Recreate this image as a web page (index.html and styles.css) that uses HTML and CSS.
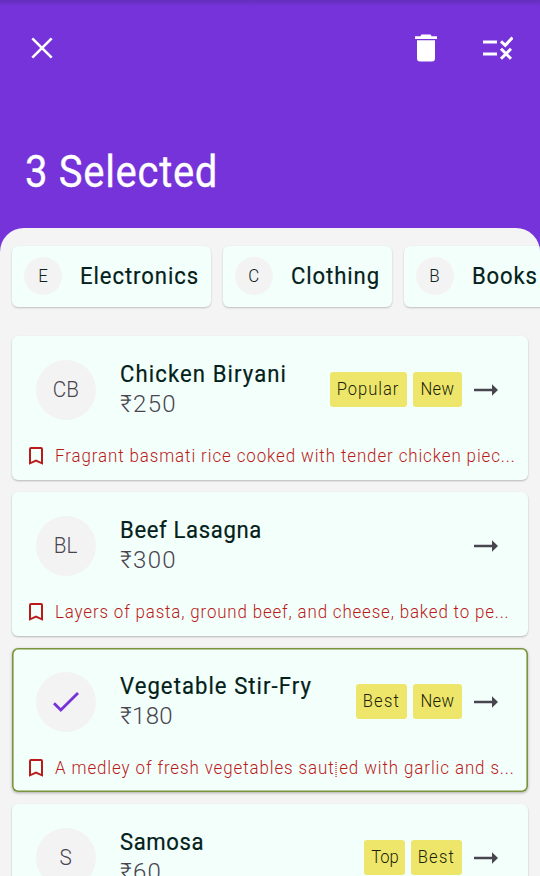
FILE: index.html
```html
<!DOCTYPE html>
<html lang="en">
<head>
<meta charset="utf-8">
<title>Catalogue selection</title>
<link rel="stylesheet" href="styles.css">
</head>
<body>
<svg class="defs" width="0" height="0">
  <symbol id="arrow" viewBox="0 0 24 12"><path d="M0 4.700h18V.300L24 6l-6 5.700V7.300H0z"/></symbol>
  <symbol id="bookmark" viewBox="0 0 14 18"><path d="M1 16.300V2q0-1 1-1h10q1 0 1 1v14.300l-6-2.600z" fill="none" stroke="currentColor" stroke-width="2"/></symbol>
</svg>
<header class="appbar">
  <div class="toolbar">
    <svg class="close" viewBox="0 0 22 22"><path d="M1.300 1.300l19.400 19.400M20.700 1.300L1.300 20.700"/></svg>
    <svg class="trash" viewBox="0 0 22 28"><path d="M6.500 .500h9l1.200 1.700H22v2.800H0V2.200h5.300zM2 6.300h18v18.200q0 3-3 3H5q-3 0-3-3z"/></svg>
    <svg class="rules" viewBox="0 0 30 24"><path d="M0 5.900h14M0 17.900h14M18 5.300l4.300 4L29.500 1.500M18 12.800l10 10M28 12.800l-10 10"/></svg>
  </div>
  <h1><span class="narrow t-title">3 Selected</span></h1>
</header>
<main class="sheet">
  <nav class="chips">
    <div class="chip c1"><span class="dot"><span>E</span></span><span class="label narrow t-el">Electronics</span></div>
    <div class="chip c2"><span class="dot"><span>C</span></span><span class="label narrow t-cl">Clothing</span></div>
    <div class="chip c3"><span class="dot"><span>B</span></span><span class="label narrow t-bo">Books</span></div>
  </nav>
  <section class="list">
    <article class="card">
      <div class="row">
        <div class="avatar"><span>CB</span></div>
        <div class="info"><h2 class="narrow t-chicken">Chicken Biryani</h2><p class="price">₹250</p></div>
        <div class="badges"><span class="badge w-popular"><span>Popular</span></span><span class="badge w-new"><span>New</span></span></div>
        <svg class="arrow"><use href="#arrow"/></svg>
      </div>
      <div class="desc"><svg class="mark"><use href="#bookmark"/></svg><span class="note d1">Fragrant basmati rice cooked with tender chicken piec...</span></div>
    </article>
    <article class="card">
      <div class="row">
        <div class="avatar"><span>BL</span></div>
        <div class="info"><h2 class="narrow t-beef">Beef Lasagna</h2><p class="price">₹300</p></div>
        <svg class="arrow"><use href="#arrow"/></svg>
      </div>
      <div class="desc"><svg class="mark"><use href="#bookmark"/></svg><span class="note d2">Layers of pasta, ground beef, and cheese, baked to pe...</span></div>
    </article>
    <article class="card selected">
      <div class="row">
        <div class="avatar"><svg class="check" viewBox="0 0 26 20"><path d="M1 11.200l6.800 6.800L25 1"/></svg></div>
        <div class="info"><h2 class="narrow t-veg">Vegetable Stir-Fry</h2><p class="price p3">₹180</p></div>
        <div class="badges"><span class="badge w-best"><span>Best</span></span><span class="badge w-new"><span>New</span></span></div>
        <svg class="arrow"><use href="#arrow"/></svg>
      </div>
      <div class="desc"><svg class="mark"><use href="#bookmark"/></svg><span class="note d3">A medley of fresh vegetables saut<i class="missing"></i>ed with garlic and s...</span></div>
    </article>
    <article class="card">
      <div class="row">
        <div class="avatar"><span>S</span></div>
        <div class="info"><h2 class="narrow t-sam">Samosa</h2><p class="price p4">₹60</p></div>
        <div class="badges"><span class="badge w-top"><span>Top</span></span><span class="badge w-best"><span>Best</span></span></div>
        <svg class="arrow"><use href="#arrow"/></svg>
      </div>
    </article>
  </section>
</main>
</body>
</html>
```
FILE: styles.css
```css
* { box-sizing: border-box; }
body {
  margin: 0;
  height: 876px;
  overflow: hidden;
  background: #7533d9;
  font-family: Roboto, "Liberation Sans", sans-serif;
  white-space: nowrap;
}
h1, h2, p { margin: 0; font-weight: 400; }
.defs { display: block; height: 0; }

/* Condensed letterforms with open tracking */
.narrow { display: inline-block; transform: scaleX(.92); transform-origin: 0 50%; }
.note { display: inline-block; transform: scaleX(.94); transform-origin: 0 50%; }
.t-title { letter-spacing: .75px; }
.t-el { letter-spacing: 1.02px; }
.t-cl { letter-spacing: 1px; }
.t-bo { letter-spacing: .9px; }
.t-chicken { letter-spacing: 1.200px; }
.t-beef { letter-spacing: .7px; }
.t-veg { letter-spacing: 1.15px; }
.t-sam { letter-spacing: .65px; }
.d1 { letter-spacing: .95px; }
.d2 { letter-spacing: .89px; }
.d3 { letter-spacing: .95px; }

.appbar {
  height: 228px;
  background: linear-gradient(#652ebb, #7533d9 6px);
  color: #fff;
}
.toolbar { height: 96px; display: flex; align-items: center; padding: 0 26px 0 31px; }
.close { width: 22px; height: 22px; margin-right: auto; }
.close path { stroke: #fff; stroke-width: 2.6; fill: none; }
.trash { width: 22px; height: 28px; fill: #fff; margin-right: 46px; }
.rules { width: 30px; height: 24px; margin-right: 1px; }
.rules path { stroke: #fff; stroke-width: 3; fill: none; }
h1 { font-size: 43.500px; line-height: 50px; padding: 52px 0 0 24.500px; -webkit-text-stroke: .3px #fff; }
.sheet {
  height: 648px;
  overflow: hidden;
  background: #f4f4f4;
  border-radius: 24px 24px 0 0;
  padding: 17.500px 12px 0;
}
.chips { display: flex; gap: 12px; height: 61.500px; }
.chip {
  flex: none;
  height: 61.500px;
  display: flex;
  align-items: center;
  padding-left: 12px;
  gap: 18px;
  background: #f3fffb;
  border-radius: 6px;
  box-shadow: 0 1px 2px rgba(0, 0, 0, .22);
}
.c1 { width: 199px; }
.c2 { width: 169px; }
.c3 { width: 152px; }
.dot {
  width: 38px;
  height: 38px;
  border-radius: 50%;
  background: #f4f3f4;
  display: grid;
  place-items: center;
  font-size: 18px;
  font-weight: 300;
  color: #0b241c;
}
.dot span, .avatar span { transform: scaleX(.94); padding-bottom: 2px; }
.label, h2 { font-size: 24px; line-height: 30px; color: #03211a; -webkit-text-stroke: .2px #03211a; }
.label { padding-bottom: 1px; }
.list { margin-top: 29px; display: grid; grid-template-columns: minmax(0, 1fr); gap: 12px; }
.card {
  height: 144px;
  background: #f3fffb;
  border-radius: 6px;
  box-shadow: 0 1px 2px rgba(0, 0, 0, .25);
  padding: 24px 30px 0 24px;
}
.selected { box-shadow: inset 0 0 0 1.6px #7b933c, 0 1px 3px rgba(0, 0, 0, .3); }
.row { display: flex; align-items: center; height: 60px; }
.avatar {
  width: 60px;
  height: 60px;
  border-radius: 50%;
  background: #f4f3f4;
  display: grid;
  place-items: center;
  font-size: 22px;
  font-weight: 300;
  color: #49454f;
}
.check { width: 26px; height: 20px; }
.check path { fill: none; stroke: #7533d9; stroke-width: 2.800; }
.info { margin-left: 24px; margin-right: auto; padding-bottom: 2px; }
.info h2 { display: block; }
.price { font-size: 24px; line-height: 30px; font-weight: 300; color: #49454f; letter-spacing: 1.300px; }
.p3 { letter-spacing: .3px; }
.p4 { letter-spacing: 1.200px; }
.badges { display: flex; gap: 6px; margin-right: 12px; padding-bottom: 1px; }
.badge {
  height: 35px;
  border-radius: 3px;
  background: #eee66b;
  color: #201f08;
  font-size: 18px;
  font-weight: 300;
  line-height: 34px;
  text-align: center;
}
.badge span { display: inline-block; transform: scaleX(.92); }
.w-popular { width: 77px; letter-spacing: 1.050px; }
.w-new { width: 49px; letter-spacing: .4px; }
.w-best { width: 51px; letter-spacing: 1.400px; }
.w-top { width: 41px; }
.arrow { width: 24px; height: 12px; fill: #49454f; }
.desc {
  display: flex;
  align-items: center;
  height: 24px;
  margin: 24px 0 0 -7px;
  color: #ba1a1a;
  font-size: 18px;
  font-weight: 300;
}
.note { padding-bottom: 2px; }
.mark { width: 14px; height: 18px; margin-right: 12px; flex: none; }
.missing {
  display: inline-block;
  width: 2px;
  height: 16px;
  margin: 0 2px 0 1px;
  vertical-align: -4px;
  background: repeating-linear-gradient(#ba1a1a 0 1px, transparent 1px 2px);
  opacity: .65;
}
```
